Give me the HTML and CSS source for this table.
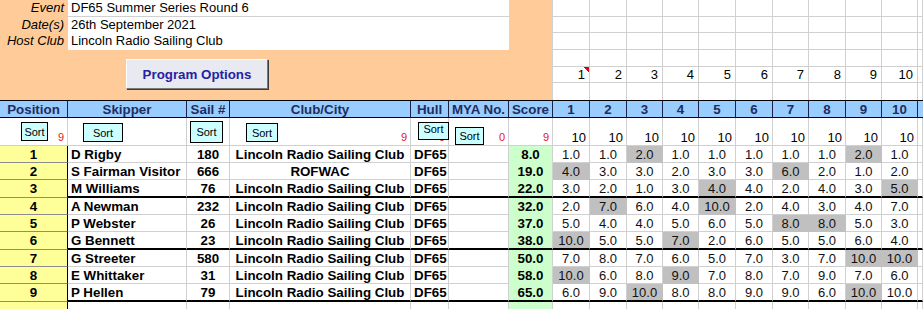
FILE: index.html
```html
<!DOCTYPE html>
<html>
<head>
<meta charset="utf-8">
<title>DF65 Summer Series Round 6</title>
<link rel="stylesheet" href="styles.css">
</head>
<body>
<div class="sheet">
  <div class="top">
    <div class="info">
      <div class="info-row"><span class="lbl">Event</span><span class="val">DF65 Summer Series Round 6</span><span></span></div>
      <div class="info-row mid"><span class="lbl">Date(s)</span><span class="val">26th September 2021</span><span></span></div>
      <div class="info-row last"><span class="lbl">Host Club</span><span class="val">Lincoln Radio Sailing Club</span><span></span></div>
      <div class="btn-area"><button class="prog-btn">Program Options</button></div>
    </div>
    <div class="topgrid">
      <span></span><span></span><span></span><span></span><span></span><span></span><span></span><span></span><span></span><span></span><span></span>
      <span></span><span></span><span></span><span></span><span></span><span></span><span></span><span></span><span></span><span></span><span></span>
      <span></span><span></span><span></span><span></span><span></span><span></span><span></span><span></span><span></span><span></span><span></span>
      <span></span><span></span><span></span><span></span><span></span><span></span><span></span><span></span><span></span><span></span><span></span>
      <span class="cm">1</span><span>2</span><span>3</span><span>4</span><span>5</span><span>6</span><span>7</span><span>8</span><span>9</span><span>10</span><span></span>
      <span></span><span></span><span></span><span></span><span></span><span></span><span></span><span></span><span></span><span></span><span></span>
    </div>
  </div>

  <div class="g">
    <div class="row hdr">
      <div>Position</div><div>Skipper</div><div>Sail #</div><div>Club/City</div><div>Hull</div><div>MYA No.</div><div>Score</div>
      <div>1</div><div>2</div><div>3</div><div>4</div><div>5</div><div>6</div><div>7</div><div>8</div><div>9</div><div>10</div><div></div>
    </div>
    <div class="row srt">
      <div><span class="rn">9</span><span class="sb s-pos">Sort</span></div>
      <div><span class="sb s-skp">Sort</span></div>
      <div><span class="sb s-sail">Sort</span></div>
      <div><span class="rn">9</span><span class="sb s-club">Sort</span></div>
      <div><span class="rn">9</span><span class="sb s-hull">Sort</span></div>
      <div><span class="rn">0</span><span class="sb s-mya">Sort</span></div>
      <div><span class="rn">9</span></div>
      <div><span class="ten">10</span></div><div><span class="ten">10</span></div><div><span class="ten">10</span></div><div><span class="ten">10</span></div><div><span class="ten">10</span></div>
      <div><span class="ten">10</span></div><div><span class="ten">10</span></div><div><span class="ten">10</span></div><div><span class="ten">10</span></div><div><span class="ten">10</span></div>
      <div></div>
    </div>

    <div class="row dat">
      <div>1</div><div>D Rigby</div><div>180</div><div>Lincoln Radio Sailing Club</div><div>DF65</div><div></div><div>8.0</div>
      <div>1.0</div><div>1.0</div><div class="d">2.0</div><div>1.0</div><div>1.0</div><div>1.0</div><div>1.0</div><div>1.0</div><div class="d">2.0</div><div>1.0</div><div></div>
    </div>
    <div class="row dat">
      <div>2</div><div>S Fairman Visitor</div><div>666</div><div>ROFWAC</div><div>DF65</div><div></div><div>19.0</div>
      <div class="d">4.0</div><div>3.0</div><div>3.0</div><div>2.0</div><div>3.0</div><div>3.0</div><div class="d">6.0</div><div>2.0</div><div>1.0</div><div>2.0</div><div></div>
    </div>
    <div class="row dat grp">
      <div>3</div><div>M Williams</div><div>76</div><div>Lincoln Radio Sailing Club</div><div>DF65</div><div></div><div>22.0</div>
      <div>3.0</div><div>2.0</div><div>1.0</div><div>3.0</div><div class="d">4.0</div><div>4.0</div><div>2.0</div><div>4.0</div><div>3.0</div><div class="d">5.0</div><div></div>
    </div>
    <div class="row dat">
      <div>4</div><div>A Newman</div><div>232</div><div>Lincoln Radio Sailing Club</div><div>DF65</div><div></div><div>32.0</div>
      <div>2.0</div><div class="d">7.0</div><div>6.0</div><div>4.0</div><div class="d">10.0</div><div>2.0</div><div>4.0</div><div>3.0</div><div>4.0</div><div>7.0</div><div></div>
    </div>
    <div class="row dat">
      <div>5</div><div>P Webster</div><div>26</div><div>Lincoln Radio Sailing Club</div><div>DF65</div><div></div><div>37.0</div>
      <div>5.0</div><div>4.0</div><div>4.0</div><div>5.0</div><div>6.0</div><div>5.0</div><div class="d">8.0</div><div class="d">8.0</div><div>5.0</div><div>3.0</div><div></div>
    </div>
    <div class="row dat grp">
      <div>6</div><div>G Bennett</div><div>23</div><div>Lincoln Radio Sailing Club</div><div>DF65</div><div></div><div>38.0</div>
      <div class="d">10.0</div><div>5.0</div><div>5.0</div><div class="d">7.0</div><div>2.0</div><div>6.0</div><div>5.0</div><div>5.0</div><div>6.0</div><div>4.0</div><div></div>
    </div>
    <div class="row dat">
      <div>7</div><div>G Streeter</div><div>580</div><div>Lincoln Radio Sailing Club</div><div>DF65</div><div></div><div>50.0</div>
      <div>7.0</div><div>8.0</div><div>7.0</div><div>6.0</div><div>5.0</div><div>7.0</div><div>3.0</div><div>7.0</div><div class="d">10.0</div><div class="d">10.0</div><div></div>
    </div>
    <div class="row dat">
      <div>8</div><div>E Whittaker</div><div>31</div><div>Lincoln Radio Sailing Club</div><div>DF65</div><div></div><div>58.0</div>
      <div class="d">10.0</div><div>6.0</div><div>8.0</div><div class="d">9.0</div><div>7.0</div><div>8.0</div><div>7.0</div><div>9.0</div><div>7.0</div><div>6.0</div><div></div>
    </div>
    <div class="row dat grp">
      <div>9</div><div>P Hellen</div><div>79</div><div>Lincoln Radio Sailing Club</div><div>DF65</div><div></div><div>65.0</div>
      <div>6.0</div><div>9.0</div><div class="d">10.0</div><div>8.0</div><div>8.0</div><div>9.0</div><div>9.0</div><div>6.0</div><div class="d">10.0</div><div>10.0</div><div></div>
    </div>
    <div class="row dat end">
      <div></div><div></div><div></div><div></div><div></div><div></div><div></div>
      <div></div><div></div><div></div><div></div><div></div><div></div><div></div><div></div><div></div><div></div><div></div>
    </div>
  </div>
</div>
</body>
</html>
```

FILE: styles.css
```css
* { box-sizing: border-box; }
html, body { margin: 0; padding: 0; }
body {
  width: 923px;
  height: 309px;
  overflow: hidden;
  background: #fff;
  font-family: "Liberation Sans", Arial, sans-serif;
  font-size: 13px;
  color: #000;
}

/* ---------- top area ---------- */
.top { display: flex; height: 100px; }
.info {
  width: 553px;
  background: #ffcc99;
  border-right: 1px solid #d0d0d0;
  display: flex;
  flex-direction: column;
}
.info-row {
  display: grid;
  grid-template-columns: 68px 441px 1fr;
  height: 17px;
}
.info-row.mid { height: 16px; }
.lbl {
  font-style: italic;
  text-align: right;
  padding-right: 4px;
  line-height: 16px;
  white-space: nowrap;
}
.val {
  background: #fff;
  border-bottom: 1px solid #d0d0d0;
  padding-left: 3px;
  line-height: 16px;
  white-space: nowrap;
}
.info-row.last .val { border-bottom: none; }
.btn-area { flex: 1; padding: 9px 0 0 126px; }
.prog-btn {
  display: block;
  width: 142px;
  height: 30px;
  padding: 0;
  background: #e9e9f1;
  border: 1px solid;
  border-color: #ffffff #7a7a7a #7a7a7a #ffffff;
  box-shadow: 1px 1px 0 #3c3c3c;
  font: bold 13.33px "Liberation Sans", Arial, sans-serif;
  color: #2323a3;
}

.topgrid {
  flex: 1;
  display: grid;
  grid-template-columns: 37px 37px 36px 36px 37px 37px 36px 37px 36px 36px 1fr;
  grid-template-rows: 17px 16px 17px 17px 16px 17px;
}
.topgrid > span {
  border-right: 1px solid #d0d0d0;
  border-bottom: 1px solid #d0d0d0;
  display: flex;
  align-items: center;
  justify-content: flex-end;
  padding-right: 4px;
  font-size: 13px;
}
.topgrid > span:nth-child(n+56) { border-bottom: none; }
.topgrid > .cm {
  background: linear-gradient(to bottom left, #e4001b 50%, transparent 50%) right top / 6px 6px no-repeat;
}

/* ---------- main grid ---------- */
.g {
  display: grid;
  grid-template-columns: 68px 119px 43px 181px 38px 60px 44px 37px 37px 36px 36px 37px 37px 36px 37px 36px 36px 1fr;
  grid-template-rows: 18px 28px 17px 17px 18px 17px 17px 18px 17px 17px 18px 7px;
}
.row { display: contents; }
.row > div {
  border-right: 1px solid #d0d0d0;
  border-bottom: 1px solid #d0d0d0;
  display: flex;
  align-items: center;
  justify-content: center;
  white-space: nowrap;
  overflow: hidden;
}

/* header */
.hdr > div {
  background: #99ccff;
  border-top: 1px solid #000;
  border-bottom: 1px solid #000;
  border-right: 1px solid #1b2244;
  font-weight: bold;
  font-size: 13.33px;
  color: #1f2d5c;
}
.hdr > div:last-child { border-right: none; }

/* sort row */
.srt > div {
  display: grid;
  grid-template-columns: 100%;
  grid-template-rows: 100%;
  justify-content: stretch;
  align-content: stretch;
  align-items: stretch;
  justify-items: stretch;
  overflow: visible;
}
.srt > div > * { grid-area: 1 / 1; }
.rn {
  justify-self: end;
  align-self: end;
  color: #e8141c;
  font-size: 11px;
  line-height: 11px;
  padding: 0 3px 2px 0;
}
.ten {
  justify-self: end;
  align-self: end;
  font-size: 13px;
  line-height: 13px;
  padding: 0 3px 1px 0;
}
.sb {
  justify-self: start;
  align-self: start;
  background: #ccffff;
  border: 1px solid #000;
  font-size: 11px;
  display: flex;
  align-items: center;
  justify-content: center;
  position: relative;
  z-index: 1;
}
.s-pos { margin: 4px 0 0 21px; width: 27px; height: 19px; }
.s-skp { margin: 5px 0 0 15px; width: 40px; height: 19px; }
.s-sail { margin: 3px 0 0 3px; width: 33px; height: 22px; }
.s-club { margin: 5px 0 0 16px; width: 32px; height: 19px; }
.s-hull { margin: 4px 0 0 7px; width: 31px; height: 18px; align-items: flex-start; line-height: 11px; padding-top: 1px; }
.s-mya { margin: 9px 0 0 6px; width: 29px; height: 18px; }

/* data rows */
.dat > div { font-size: 13px; color: #111; }
.dat > div:nth-child(-n+7) { font-weight: bold; font-size: 13.33px; color: #000; }
.dat > div:nth-child(1) {
  background: #ffff99;
  border-right-color: #000;
  border-bottom-color: #8c8c8c;
}
.dat > div:nth-child(2),
.dat > div:nth-child(5) { justify-content: flex-start; padding-left: 3px; }
.dat > div:nth-child(7) {
  background: #ccffcc;
  border-bottom-color: #ccffcc;
}
.dat > .d {
  background: #c0c0c0;
  border-right-color: #c0c0c0;
  border-bottom-color: #c0c0c0;
}
.grp > div:not(:first-child) { border-bottom: 2px solid #000; }
.grp > div:nth-child(7) { border-bottom: 2px solid #000; }
.grp > .d { border-bottom: 2px solid #000; }
.end > div { border-bottom: none; }
```
